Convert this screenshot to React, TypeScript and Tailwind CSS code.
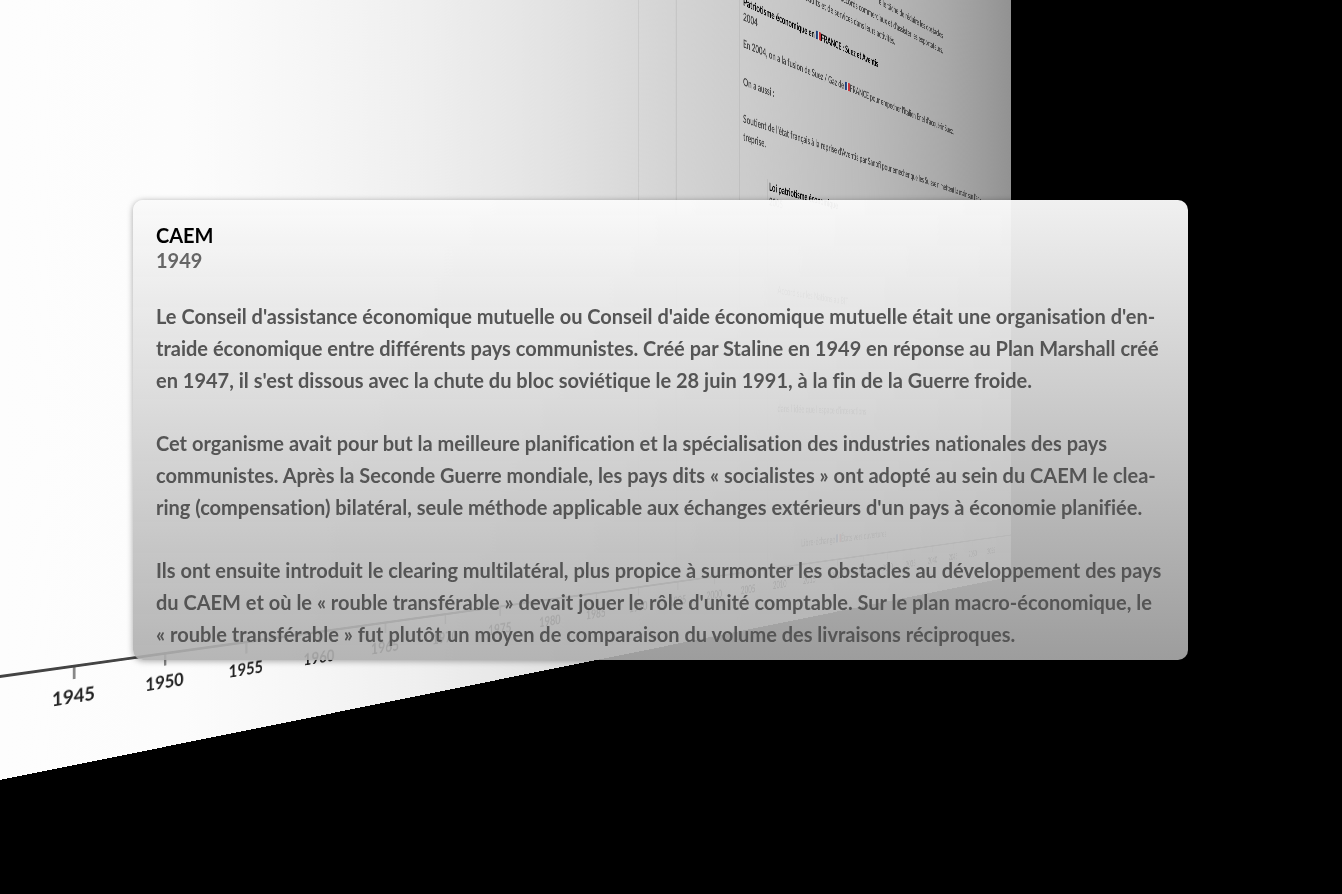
const YEARS = Array.from({ length: 23 }, (_, i) => 1945 + i * 5);

function Flag() {
  return (
    <svg viewBox="0 0 18 16" className="inline-block h-4 w-[18px] align-baseline" role="img" aria-label="Drapeau français">
      <rect width="6" height="16" fill="#1d3f7d" />
      <rect x="6" width="6" height="16" fill="#dcdcdc" />
      <rect x="12" width="6" height="16" fill="#c4343a" />
    </svg>
  );
}

function Notes() {
  return (
    <div className="flex flex-1 flex-col border-l-3 border-black/6 pt-[308px] pl-[10px] text-xl leading-9 font-bold whitespace-nowrap text-[#4a4a4a]">
      <div className="flex flex-col items-end pr-[378px] leading-[34px]">
        <p>elle tâche de réduire les obstacles</p>
        <p>accords commerciaux et d'assister les exportateurs.</p>
        <p className="pr-[228px]">produits et de services dans leurs activités.</p>
      </div>

      <div className="mt-[34px] leading-[27px]">
        <p className="text-black">
          Patriotisme économique en <Flag />FRANCE : Suez et Aventis
        </p>
        <p>2004</p>
      </div>
      <p className="mt-4">
        En 2004, on a la fusion de Suez / Gaz de <Flag />FRANCE pour empecher l'italien Enel d'acquérir Suez.
      </p>
      <p className="mt-8">On a aussi :</p>
      <p className="mt-8 leading-8">
        Soutient de l'état français à la reprise d'Aventis par Sanofi pour emecher que les Suisse n mettent la main sur l'en-
        <br />
        treprise.
      </p>

      <div className="mt-12 ml-[77px] flex flex-1 flex-col border-l-3 border-black/6 pl-1">
        <div className="leading-[27px]">
          <p className="text-black">Loi patriotisme économique</p>
          <p>2005</p>
        </div>
        <p className="mt-32 ml-7">Accord sur les Nations au BIT</p>
        <p className="mt-[183px] ml-7">dans l'idée que l'espace d'interactions</p>
        <p className="mt-[219px] ml-[110px]">
          Libre-échange <Flag />États vers ouvertures
        </p>
      </div>
    </div>
  );
}

function Wall() {
  return (
    <div
      aria-hidden="true"
      className="absolute -top-[800px] left-0 flex h-[1580px] w-[2482px] origin-[0_800px] flex-col overflow-hidden bg-[linear-gradient(to_right,#fdfdfd_0%,#fcfcfc_8%,#f6f6f6_15%,#eeeeee_23%,#e2e2e2_33%,#d5d5d5_43%,#cacaca_55%,#bbbbbb_70%,#a9a9a9_85%,#929292_100%)] will-change-transform [text-rendering:geometricPrecision] [transform:matrix3d(1.014,0.264,0,0.0006,0,1,0,0,0,0,1,0,0,0,0,1)]"
    >
      <div className="flex h-[1475px] shrink-0 pl-[1010px]">
        <div className="w-[100px] border-l-3 border-black/6" />
        <div className="w-[185px] border-l-3 border-black/6" />
        <Notes />
      </div>
      <ol className="flex border-t-3 border-[#444] pl-6">
        {YEARS.map((year) => (
          <li key={year} className="flex w-[104px] shrink-0 flex-col items-center gap-1">
            <span className="h-3 w-[3px] bg-[#888]" />
            <span className="text-xl leading-7 font-bold text-[#222]">{year}</span>
          </li>
        ))}
      </ol>
    </div>
  );
}

const PARAGRAPHS = [
  [
    "Le Conseil d'assistance économique mutuelle ou Conseil d'aide économique mutuelle était une organisation d'en-",
    'traide économique entre différents pays communistes. Créé par Staline en 1949 en réponse au Plan Marshall créé',
    "en 1947, il s'est dissous avec la chute du bloc soviétique le 28 juin 1991, à la fin de la Guerre froide.",
  ],
  [
    'Cet organisme avait pour but la meilleure planification et la spécialisation des industries nationales des pays',
    'communistes. Après la Seconde Guerre mondiale, les pays dits « socialistes » ont adopté au sein du CAEM le clea-',
    "ring (compensation) bilatéral, seule méthode applicable aux échanges extérieurs d'un pays à économie planifiée.",
  ],
  [
    'Ils ont ensuite introduit le clearing multilatéral, plus propice à surmonter les obstacles au développement des pays',
    "du CAEM et où le « rouble transférable » devait jouer le rôle d'unité comptable. Sur le plan macro-économique, le",
    '« rouble transférable » fut plutôt un moyen de comparaison du volume des livraisons réciproques.',
  ],
];

export default function App() {
  return (
    <main className="relative flex min-h-screen flex-col overflow-hidden bg-black pt-[200px] pr-[154px] pl-[133px] font-['Lato',sans-serif] [font-variant-ligatures:none]">
      <Wall />
      <article className="relative rounded-[10px] bg-linear-to-b from-[rgba(250,250,250,0.96)] to-[rgba(174,174,174,0.9)] px-[23px] pt-[23px] pb-[10px] text-xl text-[#555] shadow-[0_1px_6px_rgba(0,0,0,0.35)]">
        <h1 className="leading-[25px] font-bold text-black">CAEM</h1>
        <p className="leading-[25px] font-bold text-[#666]">1949</p>
        <div className="mt-[27px] flex flex-col gap-[31px] leading-8 font-bold">
          {PARAGRAPHS.map((lines) => (
            <p key={lines[0]}>
              {lines.map((line) => (
                <span key={line} className="block whitespace-nowrap">
                  {line}
                </span>
              ))}
            </p>
          ))}
        </div>
      </article>
    </main>
  );
}
